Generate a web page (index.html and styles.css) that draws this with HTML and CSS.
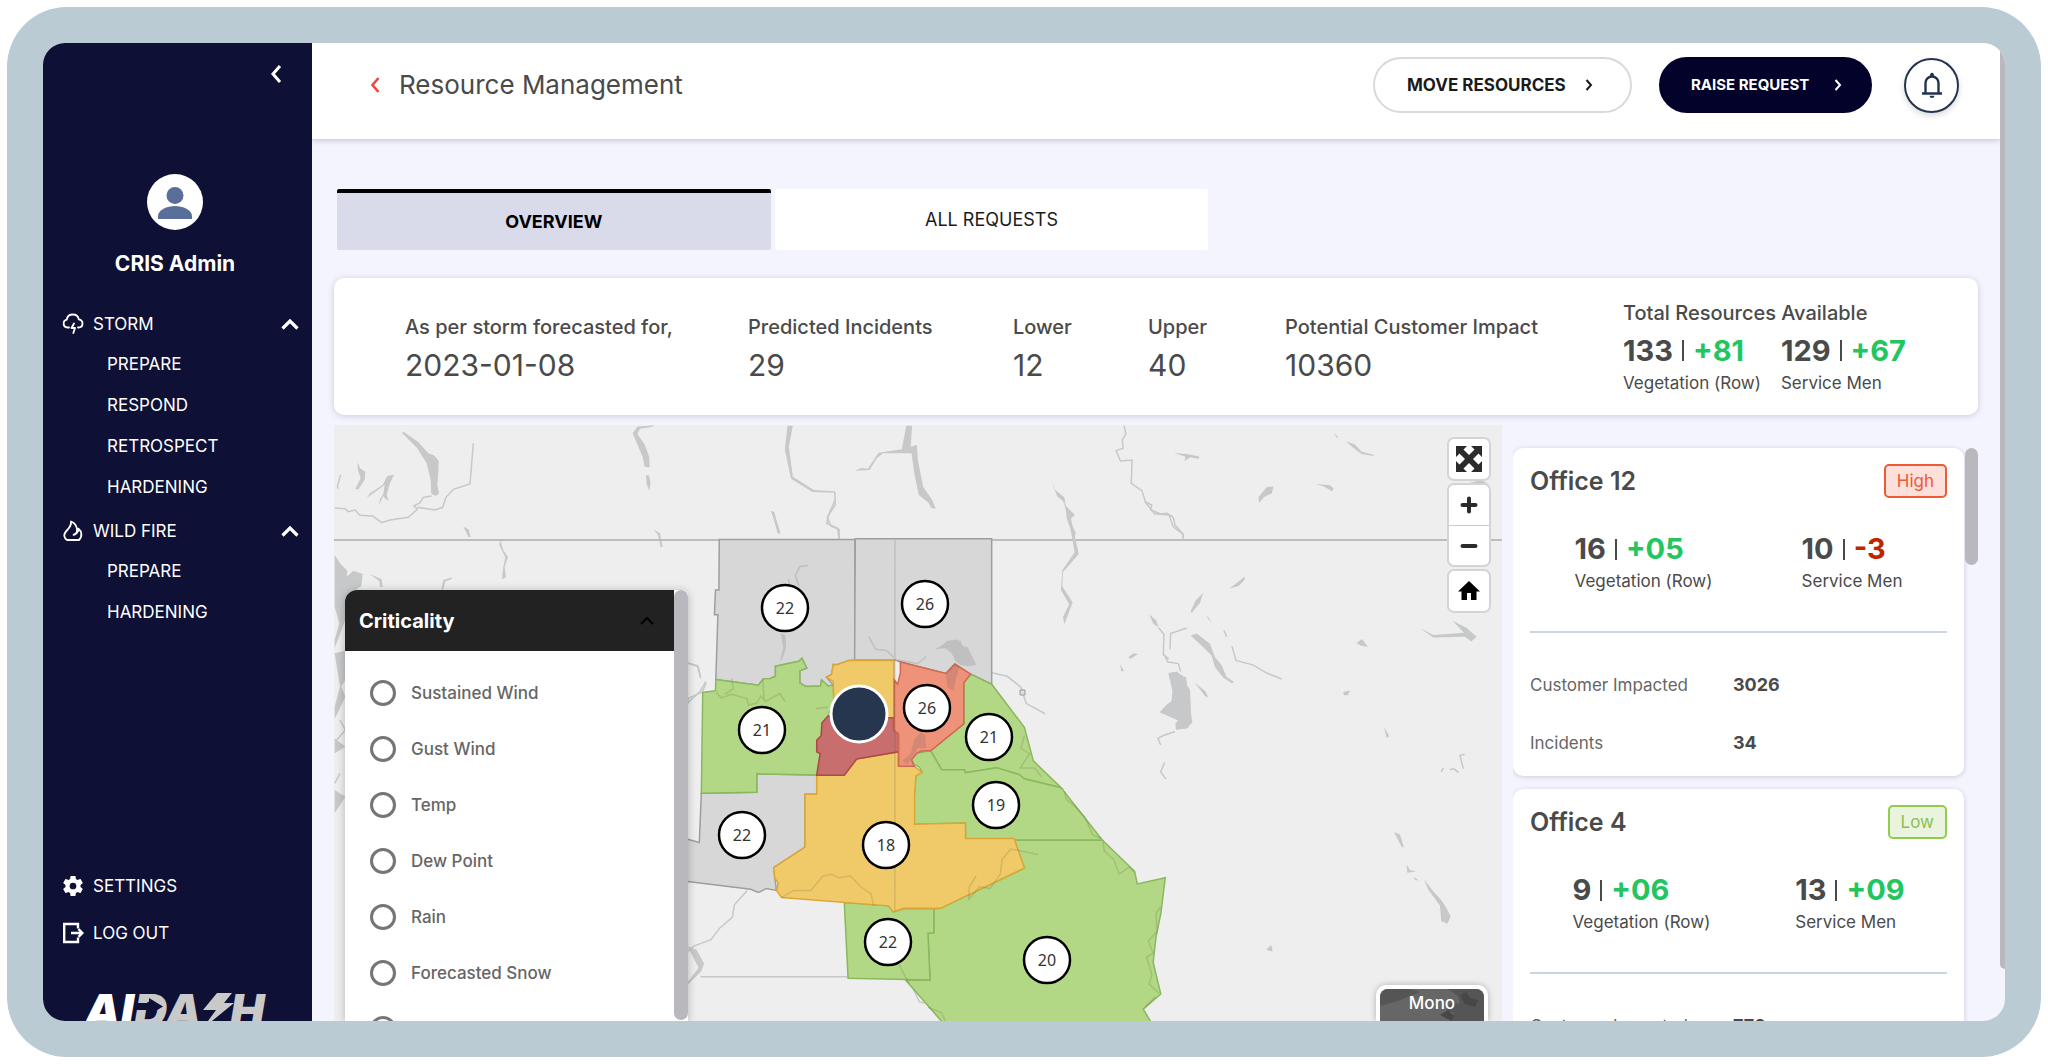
FILE: index.html
```html
<!DOCTYPE html>
<html lang="en">
<head>
<meta charset="utf-8">
<meta name="viewport" content="width=device-width, initial-scale=1">
<title>Resource Management</title>
<link rel="stylesheet" href="styles.css">
</head>
<body>
<div class="frame">
<div class="app">

  <aside class="sidebar">
    <button class="collapse" type="button" aria-label="Collapse menu">
      <svg width="12" height="20" viewBox="0 0 12 20"><path d="M10 2 3 10l7 8" fill="none" stroke="#fff" stroke-width="3"/></svg>
    </button>
    <div class="profile">
      <svg class="avatar" width="56" height="56" viewBox="0 0 56 56">
        <circle cx="28" cy="28" r="28" fill="#fff"/>
        <circle cx="28" cy="21.500" r="8.500" fill="#5a6e9a"/>
        <path d="M11 45v-3c0-6 9-10 17-10s17 4 17 10v3z" fill="#5a6e9a"/>
      </svg>
      <p class="profile-name">CRIS Admin</p>
    </div>
    <nav class="menu">
      <section class="menu-group">
        <button class="menu-head" type="button">
          <svg width="22" height="22" viewBox="0 0 22 22" fill="none" stroke="#fff" stroke-width="1.800" stroke-linecap="round" stroke-linejoin="round"><path d="M7 14.500H5.500a4 4 0 0 1-.7-7.900C5.200 3.400 7.800 1.500 10.800 1.500c3.100 0 5.500 2 6 4.900 2.200.4 3.700 2 3.700 4.100 0 2.300-1.700 4-4 4H16"/><path d="M12 10.500 9.500 15H13l-1.700 5"/></svg>
          <span>STORM</span>
          <svg class="caret" width="18" height="12" viewBox="0 0 18 12"><path d="M1.500 10.500 9 3l7.500 7.500" fill="none" stroke="#fff" stroke-width="3.200"/></svg>
        </button>
        <a href="#prepare">PREPARE</a>
        <a href="#respond">RESPOND</a>
        <a href="#retrospect">RETROSPECT</a>
        <a href="#hardening">HARDENING</a>
      </section>
      <section class="menu-group">
        <button class="menu-head" type="button">
          <svg width="22" height="22" viewBox="0 0 22 22" fill="none" stroke="#fff" stroke-width="1.800" stroke-linecap="round" stroke-linejoin="round"><path d="M5 20h12c1.800-1.800 2.600-4 2.300-6.300-.2-2-1.300-3.700-2.800-5 .2 2-.4 3.300-1.500 4C15.600 7 13 3 9 1.500c.4 3.500-1 5.500-3.300 8C3.500 11.700 2 13.500 2.300 16c.2 1.600 1.200 3 2.700 4z"/><path d="M15 11.500c-.3 2-1.500 2.800-3.500 3.300"/></svg>
          <span>WILD FIRE</span>
          <svg class="caret" width="18" height="12" viewBox="0 0 18 12"><path d="M1.500 10.500 9 3l7.500 7.500" fill="none" stroke="#fff" stroke-width="3.200"/></svg>
        </button>
        <a href="#fire-prepare">PREPARE</a>
        <a href="#fire-hardening">HARDENING</a>
      </section>
    </nav>
    <div class="account">
      <a href="#settings">
        <svg width="22" height="22" viewBox="1.500 1.500 21 21"><path fill="#fff" d="M19.140 12.940c.04-.3.060-.61.060-.94s-.02-.64-.07-.94l2.030-1.580a.49.490 0 0 0 .12-.61l-1.920-3.320a.49.490 0 0 0-.59-.22l-2.390.96a7 7 0 0 0-1.620-.94l-.36-2.540A.48.480 0 0 0 13.920 2.400h-3.840a.48.480 0 0 0-.47.410l-.36 2.540c-.59.240-1.130.57-1.620.94l-2.390-.96a.48.480 0 0 0-.59.220L2.740 8.870a.47.470 0 0 0 .12.610l2.030 1.580c-.05.300-.09.630-.09.940s.02.640.07.940l-2.030 1.580a.49.490 0 0 0-.12.610l1.920 3.320c.12.220.37.290.59.220l2.390-.96c.5.380 1.030.7 1.620.94l.36 2.540c.05.240.24.410.48.410h3.840c.24 0 .44-.17.470-.41l.36-2.540a7 7 0 0 0 1.620-.94l2.390.96c.22.080.47 0 .59-.22l1.920-3.320a.47.470 0 0 0-.12-.61zM12 15.200a3.200 3.200 0 1 1 0-6.400 3.200 3.200 0 0 1 0 6.400z"/></svg>
        <span>SETTINGS</span>
      </a>
      <a href="#logout">
        <svg width="22" height="22" viewBox="0 0 22 22" fill="none" stroke="#fff" stroke-width="2.400"><path d="M16 6.500V2H2.200v18H16v-4.500"/><path d="M9 11h11M16.500 7.200 20.300 11l-3.800 3.800"/></svg>
        <span>LOG OUT</span>
      </a>
    </div>
    <svg class="logo" width="184" height="28" viewBox="0 0 184 28" role="img" aria-label="AIDASH">
      <text x="-2" y="34" fill="#fff">AI<tspan fill="#c9c9c9">DA</tspan></text>
      <path d="M51 10h12V5l14 8.500L63 22v-5H49z" fill="#0f1035"/>
      <path d="M131 0h15l-8 10h10l-22 18h-4l8-11h-13z" fill="#c9c9c9"/>
      <text x="144" y="34" fill="#c9c9c9">H</text>
    </svg>
  </aside>

  <main class="main">
    <header class="topbar">
      <a class="back" href="#back" aria-label="Back">
        <svg width="10" height="16" viewBox="0 0 10 16"><path d="M8.500 1 2.500 8l6 7" fill="none" stroke="#f0443c" stroke-width="2.600"/></svg>
      </a>
      <h1>Resource Management</h1>
      <div class="actions">
        <button class="pill" type="button">MOVE RESOURCES
          <svg width="8" height="12" viewBox="0 0 8 12"><path d="M1.500 1 6 6l-4.500 5" fill="none" stroke="currentColor" stroke-width="2"/></svg>
        </button>
        <button class="pill pill-dark" type="button">RAISE REQUEST
          <svg width="8" height="12" viewBox="0 0 8 12"><path d="M1.500 1 6 6l-4.500 5" fill="none" stroke="currentColor" stroke-width="2"/></svg>
        </button>
        <button class="bell" type="button" aria-label="Notifications">
          <svg width="22" height="26" viewBox="0 0 22 26"><path d="M1 21.500h20M4.500 21V11a6.500 6.500 0 0 1 13 0v10" fill="none" stroke="#24344f" stroke-width="2.400"/><path d="M9 4a2 3.200 0 1 1 4 0zM8.500 23.700h5a2.500 2.200 0 0 1-5 0z" fill="#24344f"/></svg>
        </button>
      </div>
    </header>

    <div class="content">
      <div class="tabs" role="tablist">
        <button class="tab tab-active" type="button" role="tab" aria-selected="true">OVERVIEW</button>
        <button class="tab" type="button" role="tab" aria-selected="false">ALL REQUESTS</button>
      </div>

      <section class="summary">
        <div class="fact"><h2>As per storm forecasted for,</h2><p>2023-01-08</p></div>
        <div class="fact"><h2>Predicted Incidents</h2><p>29</p></div>
        <div class="fact"><h2>Lower</h2><p>12</p></div>
        <div class="fact"><h2>Upper</h2><p>40</p></div>
        <div class="fact"><h2>Potential Customer Impact</h2><p>10360</p></div>
        <div class="fact fact-total">
          <h2>Total Resources Available</h2>
          <div class="totals">
            <div class="count"><p><b>133</b><i></i><b class="up">+81</b></p><span>Vegetation (Row)</span></div>
            <div class="count"><p><b>129</b><i></i><b class="up">+67</b></p><span>Service Men</span></div>
          </div>
        </div>
      </section>

      <div class="workspace">
        <section class="map" aria-label="Resource map">
          <svg class="map-canvas" viewBox="334 425 1168 596" preserveAspectRatio="xMidYMin slice">
            <rect x="0" y="0" width="2048" height="1064" fill="#eee"/>
            <!-- lakes and rivers, north-west -->
            <g class="water" transform="translate(330 420) scale(.3333)">
              <path class="fill" d="M218 34 265 66 295 100 312 106 326 122 325 160 322 195 327 220 318 228 304 222 302 180 290 130 262 85 217 40zM82 126 90 145 106 155 104 180 84 209 76 206 92 175 84 150zM908 40 922 20 970 16 968 20 930 26 922 42 945 75 958 112 959 142 944 140 938 110zM948 166 957 166 962 190 958 212 950 192zM172 168 192 164 180 190 170 225 176 242 166 236 160 228 146 256 150 238 160 222 164 195 110 234 120 220 158 195z"/>
              <path class="fill" d="M14 405 30 430 52 452 50 470 70 452 98 462 94 498 80 508 60 520 46 545V600L14 685V660L28 610 14 560zM14 700 46 692V780L34 800 46 830 14 897V860L30 800zM14 955 46 980 14 1000zM14 1110 46 1130 14 1180zM400 320 416 328 422 350 416 352zM970 328 990 340 998 380 992 382 984 345zM120 462 155 478 158 502 150 500 148 484zM334 508 340 480 366 472 364 478 346 484 340 508zM510 358 520 390 534 412 524 440 528 472 516 478 520 440 526 412 508 375z"/>
              <path class="line" d="M14 264 45 266 55 275 75 270 90 286 128 288 155 308 180 300 235 292 262 268 252 258 270 248 280 232 305 228M262 262 315 270 338 262 348 232 370 208 420 192 426 120 430 70M32 164 22 200 26 206M1072 730 1105 740 1112 772M1128 788 1118 815 1076 835 1070 860M30 900 46 930 20 960M30 1060 14 1090"/>
            </g>
            <!-- lakes and rivers, north -->
            <g class="water" transform="translate(700 260) scale(.4464 .3333)">
              <path class="fill" d="M196 497H208L199 560 208 650 255 690 302 694V698L252 696 204 656 190 570zM462 497H475L472 560 486 555 488 600 500 680 520 720 528 746 518 744 512 728 490 705 480 640 474 580 410 580 396 595 380 630 346 632 362 624 376 626 400 578 452 568zM160 752 166 755 180 820 174 820zM784 652 796 690 816 712 820 738 840 765 828 780 842 820 838 836 822 778 818 730 800 708z"/>
              <path class="line" d="M302 696 303 735 288 765 284 790 308 805 312 836M950 497 954 522 946 540 948 565 932 572 942 603 968 600 966 670 990 692 998 726 1012 735 1010 750 1032 762 1046 760 1060 772 1064 795 1082 822V836"/>
            </g>
            <!-- lakes and rivers, east -->
            <g class="water" transform="translate(1100 420) scale(.3333 .3954)">
              <path class="fill" d="M222 84 260 86 298 92 296 98 270 94 254 104 256 92zM475 196 490 180 500 170 520 168 516 185 492 195 478 210zM648 162 690 165 702 174 696 180 672 168zM702 32 716 45 710 44zM738 54 765 62 785 80 820 88 822 91 785 86 765 74zM1104 160 1145 152 1164 162 1168 208 1160 190zM388 426 410 412 434 396 434 404 416 420zM310 436 300 462 275 488 272 484 286 458zM148 492 168 506 176 524 160 515zM320 492 335 512 325 504zM272 545 290 540 330 566 345 600 365 620 380 650 402 662 396 666 370 652 345 625 335 596 310 575zM85 600 100 590 114 592 92 604zM60 618 72 634 64 636zM284 664 316 686 325 702 315 698zM770 564 786 554 804 574 782 570zM730 688 750 684 744 696 732 696zM852 776 868 800 860 804zM960 526 1000 544 1092 538 1058 508 1100 526 1130 548 1114 560 1095 548 1000 550zM882 1042 900 1048 912 1082 904 1078zM920 1125 930 1138 948 1142 922 1145zM940 1155 956 1164 946 1164zM972 1162 1000 1192 1025 1215 1040 1235 1052 1256 1042 1274 1024 1268 1020 1228 985 1188zM498 1340 514 1328 518 1344z"/>
              <path class="fill" d="M206 640 232 636 244 648 258 650 262 672 270 682 274 756 262 766 266 778 228 784 226 768 238 756 222 740 180 738 200 720 222 706 224 680z"/>
              <path class="line" d="M176 526 192 542 190 590 204 612 235 616 242 636M210 580 212 540 260 526M206 604 188 592M396 572 408 608 460 620 500 640 545 655M372 532 380 548M225 788 190 798 174 805 182 822M194 866 182 890 198 908M1094 846 1080 848 1090 882M1024 890 1030 880M1050 884 1062 882 1076 892"/>
            </g>
            <path d="M334 540H1502" stroke="#bdbdbd" stroke-width="2"/>
            <!-- service territories -->
            <g class="regions" transform="translate(680 500) scale(.3444 .3598)">
              <g class="water">
                <path class="fill" d="M264 30 272 36 292 95 286 92zM1418 482 1436 478 1460 488 1462 512 1474 525 1480 580 1488 618 1470 636 1440 634 1450 614 1392 590 1426 570 1430 530zM22 1240 48 1250 70 1288 62 1310 22 1348V1340L54 1300z"/>
                <path class="fill" d="M1112 0 1134 45 1140 75 1158 150 1112 200 1110 240 1140 285 1116 345 1112 325 1130 290 1106 250 1110 195 1146 145 1130 60z"/>
                <path class="line" d="M450 0 428 50 438 72 462 82V108M1350 5 1378 38 1420 42 1432 74 1460 95V110M22 452 50 460 60 495M75 505 60 530 22 565M195 1085 158 1125 152 1160 115 1190 90 1222 40 1240 22 1255M905 480 950 490 990 520 1005 565 1060 594M60 1325H490M665 1334 695 1395 710 1398"/>
              </g>
              <path class="na" d="M114 110H508V445L490 446 455 458 445 457 440 485 425 492 445 515 430 517 411 500 408 517 365 518 348 508V475L368 467 354 440 345 448 300 457 277 462V490L262 496 242 497 228 515 104 499 110 319H100L103 250H113z"/>
              <path class="na" d="M509 108H905V512L840 482 798 456 772 482 640 450 625 445H507z"/>
              <path class="na" d="M62 815 223 812V761L397 764V818H363V965L272 1022 280 1085 250 1080 228 1091 205 1082 22 1060-10 1056V940L22 943 56 952z"/>
              <path class="low" d="M970 945H1226L1320 1032 1328 1067 1409 1050 1396 1150 1382 1215 1374 1285 1396 1373 1345 1415 1370 1455H765L655 1334H726L720 1204 737 1203V1136L756 1135 1000 1023z"/>
              <path class="low" d="M477 1119 605 1128 620 1145 650 1136H737V1203L720 1204 726 1334 488 1329z"/>
              <path class="low" d="M104 499 228 515 242 497 262 496 277 490V462L300 457 345 448 354 440 368 467 348 475V508L365 518 408 517 411 500 430 517 445 515 447 560 430 600 412 620 410 655 397 668V700L407 705 397 764 223 761V812L62 815 66 535 103 530z"/>
              <path class="low" d="M844 484 905 512 1000 632 1026 725 1107 800 1000 775 920 744 828 758 826 750H760L728 697 824 622V508z"/>
              <path class="low" d="M728 697 760 750H826L828 758 920 744 985 763 1000 775 1107 800 1226 945H970L829 941V898L680 901V822L685 765 703 757 695 742 680 735 672 722 688 703z"/>
              <path class="mid" d="M445 457 455 458 490 446H621V605H430L447 580 445 505 425 492 440 485z"/>
              <path class="mid" d="M397 765H477L513 720 633 700V740H680L703 757 685 767 681 822V901L829 898V941H970L1000 1023 756 1135H650L620 1145 605 1128 295 1105 280 1085 285 1065 275 1050 272 1022 363 965V818H397z"/>
              <path class="severe" d="M430 600 440 605H620V640L635 650V700L513 720 477 765H397L407 705 397 700V668L410 655 412 620z"/>
              <path class="high" d="M640 450 772 482 798 456 844 484 824 508V622L728 697H705L688 703 672 722 680 740H635V650L622 640V500L632 512 640 480z"/>
              <g class="relief">
                <path class="tint" d="M740 415 762 403 775 392 800 388 815 392 820 405 836 410 860 458 835 462 812 458 800 448 788 425 770 412zM772 482 798 456 812 462 800 500 795 530 776 520zM680 665 700 645 712 655 715 690 690 690 660 735 645 725 670 705zM292 370 306 375 308 410 298 440 290 450 300 410z"/>
                <path d="M548 380 568 415 600 418 620 438M632 445 690 455 715 435M372 182 348 185 335 210 345 240M315 220 318 240M624 110V1145M105 535 120 550 150 540 195 552 198 570 222 565 235 545 248 560 290 538 305 560M240 500 245 560M150 495 155 525 130 540M395 580 430 575M295 1105 330 1085 380 1085 415 1045 440 1040 460 1050 495 1045 525 1075 555 1095 562 1128M1000 655 990 690 1015 705 988 745 1030 745 1050 770M1118 810 1120 830 1150 855 1175 880 1198 930 1222 940M1228 950 1232 975 1260 1000 1275 1040 1305 1020 1318 1035M860 1045 840 1075 838 1110 870 1075 900 1080 930 1040 935 1000 960 970 1040 985M1395 1130 1382 1150 1385 1200 1360 1225 1374 1260 1355 1270 1370 1320 1362 1345 1390 1370M1380 1380 1350 1410M720 1410 760 1425 770 1448M635 1290 665 1345"/>
              </g>
            </g>
            <path d="M1020 690h5v5h-5z" fill="#ddd" stroke="#999"/>
            <g class="pins">
              <circle cx="785" cy="608" r="23"/><text x="785" y="614">22</text>
              <circle cx="925" cy="604" r="23"/><text x="925" y="610">26</text>
              <circle cx="762" cy="730" r="23"/><text x="762" y="736">21</text>
              <circle cx="927" cy="708" r="23"/><text x="927" y="714">26</text>
              <circle cx="989" cy="737" r="23"/><text x="989" y="743">21</text>
              <circle cx="996" cy="805" r="23"/><text x="996" y="811">19</text>
              <circle cx="742" cy="835" r="23"/><text x="742" y="841">22</text>
              <circle cx="886" cy="845" r="23"/><text x="886" y="851">18</text>
              <circle cx="888" cy="942" r="23"/><text x="888" y="948">22</text>
              <circle cx="1047" cy="960" r="23"/><text x="1047" y="966">20</text>
              <circle class="selected" cx="859" cy="714" r="28"/>
            </g>
          </svg>

          <div class="criticality">
            <div class="criticality-body">
              <button class="criticality-head" type="button">Criticality
                <svg width="14" height="9" viewBox="0 0 14 9"><path d="M1 8l6-6 6 6" fill="none" stroke="#000" stroke-width="2"/></svg>
              </button>
              <div class="options">
                <label><input type="radio" name="criticality">Sustained Wind</label>
                <label><input type="radio" name="criticality">Gust Wind</label>
                <label><input type="radio" name="criticality">Temp</label>
                <label><input type="radio" name="criticality">Dew Point</label>
                <label><input type="radio" name="criticality">Rain</label>
                <label><input type="radio" name="criticality">Forecasted Snow</label>
                <label><input type="radio" name="criticality">Cloud</label>
              </div>
            </div>
            <div class="criticality-scroll"></div>
          </div>

          <div class="map-controls">
            <div class="control">
              <button type="button" aria-label="Full screen">
                <svg width="28" height="28" viewBox="0 0 28 28" fill="#2b2b2b"><path d="M1 1h11l-3.500 3.500L14 10l5.500-5.500L16 1h11v11l-3.500-3.500L18 14l5.500 5.500L27 16v11H16l3.500-3.500L14 18l-5.500 5.500L12 27H1V16l3.500 3.500L10 14 4.500 8.500 1 12z"/></svg>
              </button>
            </div>
            <div class="control">
              <button type="button" aria-label="Zoom in"><svg width="18" height="18" viewBox="0 0 18 18"><path d="M9 2.500v13M2.500 9h13" stroke="#2b2b2b" stroke-width="4" stroke-linecap="round"/></svg></button>
              <button type="button" aria-label="Zoom out"><svg width="18" height="18" viewBox="0 0 18 18"><path d="M2.500 9h13" stroke="#2b2b2b" stroke-width="4" stroke-linecap="round"/></svg></button>
            </div>
            <div class="control">
              <button type="button" aria-label="Home"><svg width="22" height="20" viewBox="0 0 22 20"><path d="M11 0 22 10.500h-3.500V19h-5.500v-7H9v7H3.500v-8.500H0z"/></svg></button>
            </div>
          </div>

          <button class="basemap" type="button">
            <svg viewBox="0 0 104 32" preserveAspectRatio="xMidYMin slice"><rect width="104" height="32" fill="#666"/><path d="M0 0h30l10 3-22 9-18 5zM68 0h36v32H70l4-8-8-3 6-8 8 2-2-8z" fill="#555"/><path d="M80 6l6-3 4 6 8 2-3 7-10-3zM60 26l8-5 6 6-3 5z" fill="#474747"/></svg>
            <span>Mono</span>
          </button>
        </section>

        <aside class="offices">
          <div class="office-list">
            <article class="office">
              <header><h3>Office 12</h3><span class="badge badge-high">High</span></header>
              <div class="office-counts">
                <div class="count"><p><b>16</b><i></i><b class="up">+05</b></p><span>Vegetation (Row)</span></div>
                <div class="count"><p><b>10</b><i></i><b class="down">-3</b></p><span>Service Men</span></div>
              </div>
              <dl><dt>Customer Impacted</dt><dd>3026</dd><dt>Incidents</dt><dd>34</dd></dl>
            </article>
            <article class="office">
              <header><h3>Office 4</h3><span class="badge badge-low">Low</span></header>
              <div class="office-counts">
                <div class="count"><p><b>9</b><i></i><b class="up">+06</b></p><span>Vegetation (Row)</span></div>
                <div class="count"><p><b>13</b><i></i><b class="up">+09</b></p><span>Service Men</span></div>
              </div>
              <dl><dt>Customer Impacted</dt><dd>770</dd></dl>
            </article>
          </div>
          <div class="office-scroll"></div>
        </aside>
      </div>
    </div>
  </main>
  <div class="page-scroll"></div>
</div>
</div>
</body>
</html>
```
FILE: styles.css
```css
* { box-sizing: border-box; margin: 0; padding: 0; }
body { background: #fff; color: #4a4a4a; font-family: Inter, "Open Sans", sans-serif; font-size: 17px; line-height: 20px; }
button { border: 0; background: none; font: inherit; color: inherit; cursor: pointer; }
a { color: inherit; text-decoration: none; }
svg { display: block; flex: none; }

.frame { margin: 7px; padding: 36px; height: calc(100vh - 14px); border-radius: 60px; background: #bacbd3; }
.app { display: grid; grid-template-columns: 269px minmax(0, 1fr) 5px; grid-template-rows: minmax(0, 1fr); height: 100%; border-radius: 22px; overflow: hidden; background: #f4f4fe; }

/* sidebar */
.sidebar { display: flex; flex-direction: column; background: #0f1035; color: #fff; overflow: hidden; }
.collapse { align-self: flex-end; margin: 21px 30px 0 0; }
.profile { display: flex; flex-direction: column; align-items: center; margin-top: 90px; padding-right: 5px; }
.profile-name { margin-top: 22px; font-size: 21px; line-height: 24px; font-weight: 700; }
.menu { display: flex; flex-direction: column; gap: 2px; margin-top: 27px; }
.menu-group { display: flex; flex-direction: column; }
.menu-head { display: flex; align-items: center; gap: 9px; height: 41px; padding: 0 13px 0 19px; }
.caret { margin-left: auto; }
.menu-group a { height: 41px; padding-left: 64px; line-height: 41px; }
.account { margin-top: auto; }
.account a { display: flex; align-items: center; gap: 9px; height: 47px; padding-left: 19px; }
.logo { margin: 37px 0 0 43px; font-size: 46px; font-weight: 900; font-style: italic; }

/* top bar */
.main { display: flex; flex-direction: column; min-width: 0; overflow: hidden; }
.topbar { display: flex; align-items: center; flex: none; height: 96px; padding: 0 41px 12px 58px; background: #fff; box-shadow: 0 1px 6px rgba(30, 30, 60, .25); }
h1 { margin-left: 19px; font-size: 26px; line-height: 32px; font-weight: 400; }
.actions { display: flex; align-items: center; margin-left: auto; }
.pill { display: flex; align-items: center; justify-content: space-between; width: 259px; height: 56px; padding: 0 37px 0 32px; border: 2px solid #d9d9d9; border-radius: 28px; background: #fff; color: #1b1b1b; font-size: 17px; font-weight: 700; white-space: nowrap; }
.pill-dark { width: 213px; margin: 0 32px 0 27px; padding: 0 28px 0 30px; border-color: #02022a; background: #02022a; color: #fff; font-size: 15px; }
.bell { display: grid; place-items: center; width: 55px; height: 55px; border: 2px solid #24344f; border-radius: 50%; background: #fff; box-shadow: 0 3px 6px rgba(0, 0, 0, .15); }

/* content */
.content { display: flex; flex: 1; flex-direction: column; min-height: 0; padding: 50px 22px 0; }
.tabs { display: grid; grid-template-columns: 1fr 1fr; gap: 4px; flex: none; width: 53%; height: 61px; margin-left: 3px; }
.tab { background: #fff; color: #1b1b1b; border-radius: 2px; font-size: 18px; }
.tab-active { border-top: 4px solid #000; background: #dadbea; color: #000; font-weight: 700; }
.summary { display: grid; grid-template-columns: 343fr 265fr 135fr 137fr 338fr 355fr; align-items: center; flex: none; height: 137px; margin-top: 28px; padding-left: 71px; border-radius: 10px; background: #fff; box-shadow: 0 1px 6px rgba(40, 40, 90, .2); white-space: nowrap; }
.fact { padding-top: 7px; }
.fact-total { padding-top: 2px; }
.fact h2 { font-size: 20px; line-height: 24px; font-weight: 500; }
.fact > p { margin-top: 6px; font-size: 30px; line-height: 40px; }
.totals { display: flex; gap: 20px; }
.count p { display: flex; align-items: center; gap: 9px; height: 40px; margin-top: 7px; font-size: 29px; line-height: 40px; }
.count b { font-weight: 700; }
.count i { width: 2px; height: 21px; background: #4a4a4a; }
.count span { font-size: 17px; line-height: 24px; }
.totals .count p { margin-top: 6px; }
.count .up { color: #22c55e; }
.count .down { color: #bf2600; }

.workspace { display: flex; flex: 1; gap: 11px; min-height: 0; margin-top: 10px; }

/* map */
.map { position: relative; flex: 1; min-width: 0; overflow: hidden; background: #eee; }
.map-canvas { width: 100%; height: 100%; }
.map-canvas path { vector-effect: non-scaling-stroke; }
.water .fill { fill: #c6c8ca; }
.water .line { fill: none; stroke: #c6c8ca; stroke-width: 1.500px; }
.na { fill: #d7d7d7; stroke: #9e9e9e; stroke-width: 1.500px; }
.low { fill: #b2d785; stroke: #8ab85c; stroke-width: 1.500px; }
.mid { fill: #f0ca69; stroke: #dba636; stroke-width: 1.500px; }
.high { fill: #ee927a; stroke: #cf6a50; stroke-width: 1.500px; }
.severe { fill: #c86e6e; stroke: #b04848; stroke-width: 1.500px; }
.relief path { fill: none; stroke: rgba(90, 90, 60, .18); stroke-width: 1.500px; }
.relief .tint { fill: rgba(90, 90, 90, .18); stroke: none; }
.pins circle { fill: #fff; stroke: #000; stroke-width: 2.500px; }
.pins .selected { fill: #26364f; stroke: #fff; stroke-width: 3px; }
.pins text { fill: #333; font: 16px "Noto Sans", sans-serif; text-anchor: middle; }

.criticality { position: absolute; left: 11px; top: 165px; bottom: 0; display: flex; width: 343px; border-radius: 12px 6px 0 0; background: #fff; box-shadow: 0 1px 8px rgba(0, 0, 0, .25); overflow: hidden; }
.criticality-body { flex: 1; }
.criticality-head { display: flex; align-items: center; justify-content: space-between; width: 100%; height: 61px; padding: 0 20px 0 14px; background: #222; color: #fff; font-size: 20px; font-weight: 700; }
.criticality-scroll { width: 14px; margin-bottom: 1px; border-radius: 7px; background: #b9b8be; }
.options { padding: 14px 25px 0; }
.options label { display: flex; align-items: center; gap: 15px; height: 56px; color: #666; font-weight: 500; }
.options input { appearance: none; width: 26px; height: 26px; border: 3px solid #757575; border-radius: 50%; }

.map-controls { position: absolute; right: 11px; top: 12px; display: flex; flex-direction: column; gap: 2px; width: 44px; }
.control { border: 2px solid #d4d4d4; border-radius: 7px; background: #fff; }
.control button { display: grid; place-items: center; width: 100%; height: 40px; }
.control button + button { border-top: 1px solid #ccc; }
.basemap { position: absolute; right: 14px; bottom: 0; width: 112px; height: 36px; padding: 4px 4px 0; border-radius: 10px 10px 0 0; background: #fff; box-shadow: 0 0 6px rgba(0, 0, 0, .25); color: #fff; font-weight: 500; }
.basemap svg { width: 104px; height: 32px; border-radius: 8px 8px 0 0; }
.basemap span { position: absolute; left: 0; right: 0; top: 8px; }

/* offices */
.offices { display: flex; gap: 1px; width: 465px; overflow: hidden; padding-top: 23px; }
.office-list { display: flex; flex: 1; flex-direction: column; gap: 13px; min-width: 0; }
.office { flex: none; height: 328px; padding: 16px 17px 0; border-radius: 10px; background: #fff; box-shadow: 0 1px 5px rgba(40, 40, 90, .2); }
.office header { display: flex; align-items: center; justify-content: space-between; height: 34px; }
.office h3 { font-size: 25px; line-height: 32px; font-weight: 600; }
.badge { height: 34px; padding: 0 11px; border: 2px solid; border-radius: 5px; line-height: 30px; }
.badge-high { border-color: #ee5a36; background: #fde0da; color: #ee5a36; }
.badge-low { border-color: #8fce4d; background: #e9f3de; color: #8cc152; }
.office-counts { display: flex; justify-content: space-around; height: 135px; padding-top: 24px; border-bottom: 2px solid #cbd5e1; }
.office dl { display: grid; grid-template-columns: 203px 1fr; padding-top: 23px; line-height: 58px; }
.office dt { font-size: 17px; color: #666; }
.office dd { font-size: 18px; font-weight: 700; }
.office-scroll { width: 13px; height: 117px; border-radius: 7px; background: #b9b8be; }
.page-scroll { height: calc(100% - 52px); border-radius: 0 0 0 5px; background: #b9b8be; }
```
